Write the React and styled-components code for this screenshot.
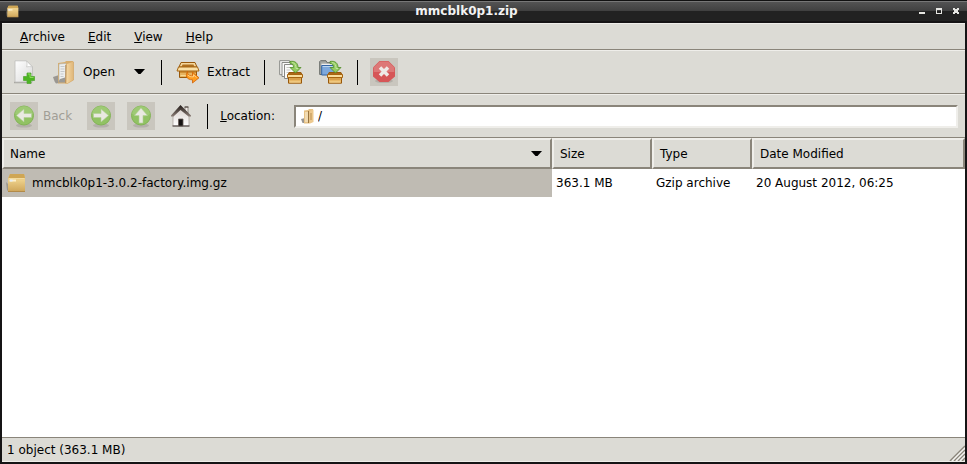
import { useState } from "react";
import styled, { createGlobalStyle } from "styled-components";

const face = "#dcdbd5";
const light = "#efeeea";
const dark = "#8a857a";
const disabledFace = "#c9c6be";

const GlobalStyles = createGlobalStyle`
  * {
    box-sizing: border-box;
  }
  body {
    margin: 0;
    font-family: "DejaVu Sans", sans-serif;
    font-size: 12px;
    color: #000;
  }
  button, input {
    font: inherit;
    color: inherit;
  }
`;

const Window = styled.div`
  display: flex;
  flex-direction: column;
  min-height: 100vh;
  padding: 0 2px 2px;
  background: #151415;
`;

const TitleBar = styled.header`
  display: grid;
  grid-template-columns: auto 1fr auto;
  align-items: center;
  height: 23px;
  margin: 0 -2px;
  padding: 0 2px 0 6px;
  border-top: 1px solid #111;
  border-bottom: 2px solid #151415;
  background: linear-gradient(#777 0 1px, #535353 1px, #404040 10px, #222 10px);
`;

const Title = styled.h1`
  margin: 0;
  font-size: 12px;
  font-weight: bold;
  text-align: center;
  color: #f2f2f2;
`;

const WindowControls = styled.div`
  display: flex;
`;

const ControlButton = styled.button`
  display: flex;
  align-items: center;
  justify-content: center;
  width: 17px;
  height: 17px;
  padding: 0;
  border: 0;
  background: none;
`;

const bar = `
  display: flex;
  align-items: center;
  background: ${face};
  border-top: 1px solid ${light};
  border-bottom: 1px solid ${dark};
`;

const MenuBar = styled.nav`
  ${bar}
  height: 27px;
  padding: 0 6px;
`;

const MenuItem = styled.button`
  padding: 0 12px 0 11px;
  border: 0;
  background: none;

  &:first-child {
    padding-left: 12px;
  }
`;

const Toolbar = styled.div`
  ${bar}
  gap: 12px;
  height: 44px;
  padding: 0 7px 0 8px;
`;

const ToolButton = styled.button`
  display: flex;
  align-items: center;
  flex: none;
  gap: 7px;
  padding: 2px;
  border: 0;
  background: none;

  svg {
    display: block;
  }
`;

const ArrowButton = styled(ToolButton)`
  width: 20px;
  height: 28px;
  justify-content: center;
`;

const DisabledFace = styled.span`
  padding: 2px;
  background: ${disabledFace};
`;

const DisabledButton = styled(ToolButton)`
  gap: 5px;
  padding: 0;
  color: #a19e96;
`;

const BackButton = styled(DisabledButton)`
  padding-right: 3px;
`;

const Separator = styled.span`
  flex: none;
  width: 1px;
  height: 25px;
  background: #000;
`;

const Field = styled.div`
  display: flex;
  align-items: center;
  flex: 1;
  height: 23px;
  margin-left: 7px;
  padding-left: 4px;
  background: #fff;
  border: 2px solid;
  border-color: ${dark} ${light} ${light} ${dark};
`;

const LocationInput = styled.input`
  flex: 1;
  min-width: 0;
  padding: 0 2px;
  border: 0;
  outline: 0;
  background: none;
`;

const List = styled.main`
  flex: 1;
  background: #fff;
`;

const FileTable = styled.table`
  width: 100%;
  table-layout: fixed;
  border-collapse: separate;
  border-spacing: 0;
`;

const Column = styled.col`
  width: ${(props) => props.$width || "auto"};
`;

const HeaderCell = styled.th`
  height: 31px;
  padding: 0 6px;
  text-align: left;
  font-weight: normal;
  background: ${face};
  border: 2px solid;
  border-color: ${light} ${dark} ${dark} ${light};
`;

const HeaderContent = styled.div`
  display: flex;
  align-items: center;
  justify-content: space-between;
  padding-right: 2px;
`;

const Cell = styled.td`
  height: 28px;
  padding: 0 4px;
  white-space: nowrap;
  background: ${(props) => (props.$selected ? "#bfbbb3" : "#fff")};
`;

const FileName = styled.div`
  display: flex;
  align-items: center;
  gap: 6px;
`;

const StatusBar = styled.footer`
  display: flex;
  align-items: center;
  justify-content: space-between;
  height: 25px;
  padding-left: 5px;
  background: ${face};
  border-top: 1px solid ${dark};
  border-bottom: 1px solid ${light};
`;

const Grip = styled.svg`
  align-self: flex-end;
`;

const DownArrow = () => (
  <svg width="11" height="6" viewBox="0 0 11 6" aria-hidden="true">
    <path d="M0 0h11L6.5 5h-2z" fill="#000" />
  </svg>
);

const PackageIcon = ({ size = 20 }) => (
  <svg width={size} height={size} viewBox="0 0 20 20" aria-hidden="true">
    <defs>
      <linearGradient id="pack" x1="0" y1="0" x2="0" y2="1">
        <stop offset="0" stopColor="#d9b566" />
        <stop offset="0.35" stopColor="#edd08a" />
        <stop offset="1" stopColor="#cfa65a" />
      </linearGradient>
    </defs>
    <path d="M0 9l3 3v7l-2-2z" fill="#847e75" opacity=".6" />
    <path d="M4 1h14l1 4v13.500H2V5z" fill="url(#pack)" />
    <path d="M4 1h14l1 4H2.500z" fill="#cfa654" />
    <path d="M3 5.500h15.500" stroke="#f2da9d" />
    <path d="M4 7.500h6" stroke="#fff1cd" strokeWidth="2" />
    <path d="M3.500 7.500h3" stroke="#e4ecf4" strokeWidth="2" />
    <path d="M2 18.500h17" stroke="#b28a48" />
  </svg>
);

const NewIcon = () => (
  <svg width="24" height="24" viewBox="0 0 24 24" aria-hidden="true">
    <defs>
      <linearGradient id="paper" x1="0" y1="0" x2="1" y2="1">
        <stop offset="0" stopColor="#fff" />
        <stop offset="1" stopColor="#d9d9d9" />
      </linearGradient>
    </defs>
    <path d="M2 22.500h18" stroke="#aaa8a3" strokeWidth="1.500" />
    <path d="M3 .8h11.500l6 6V22H3z" fill="url(#paper)" stroke="#bcbcba" strokeWidth=".8" />
    <path d="M14.500 1c1 3 .5 5 0 6 2-.6 4-.4 6 0z" fill="#fff" stroke="#c4c4c2" strokeWidth=".7" />
    <path d="M15 13h4v3.500h3.500v4H19V23.500h-4v-3h-3.500v-4H15z" fill="#4cb522" stroke="#57a637" strokeWidth=".8" />
    <path d="M16 14h2v3.500h3.500" fill="none" stroke="#8bdd58" />
  </svg>
);

const FolderIcon = () => (
  <svg width="24" height="24" viewBox="0 0 24 24" aria-hidden="true">
    <defs>
      <linearGradient id="folder" x1="0" y1="0" x2="1" y2="0">
        <stop offset="0" stopColor="#f7dcaa" />
        <stop offset="1" stopColor="#dfb678" />
      </linearGradient>
    </defs>
    <path d="M1 17l6-2v8l-3 .5c-1-1-2-3-3-6.500z" fill="#7d7a75" opacity=".7" />
    <path d="M6 3l7-1 1-1h6.500l1 1v18l-6 3.500H6z" fill="#d8ae6e" />
    <path d="M7 4l7-.5V20l-7 1.500z" fill="#eceeee" stroke="#b4b1aa" strokeWidth=".6" />
    <path d="M8.500 6.500h4M8.500 9h4M8.500 11.500h4M8.500 14h3M8.500 16.500h3" stroke="#c5c8ca" />
    <path d="M8 19l5-1.500v5H6z" fill="#9b9a96" />
    <path d="M14.500 4l6-2.500 1 .5v18l-6 3.500h-2z" fill="url(#folder)" stroke="#d0a466" strokeWidth=".5" />
    <path d="M13.800 5v18" stroke="#a77b42" strokeWidth=".8" />
  </svg>
);

const SmallFolderIcon = () => (
  <svg width="16" height="16" viewBox="0 0 16 16" aria-hidden="true">
    <path d="M1 11l4-1v5H2.500z" fill="#77736d" opacity=".75" />
    <path d="M4 2.500L8 2l1-1h4v12.500L9 15.500H4z" fill="#e6c184" />
    <path d="M5 4h3v10H5z" fill="#f1dbb2" />
    <path d="M8.500 3v12" stroke="#97733e" />
    <path d="M9.500 3.500L13 1.500l.5.500v12l-4 1.700z" fill="#edc98e" />
    <path d="M11 5v7" stroke="#b98f53" />
  </svg>
);

const ExtractIcon = () => (
  <svg width="24" height="24" viewBox="0 0 24 24" aria-hidden="true">
    <path d="M3.500 8h17v9.500h-17z" fill="#e7b460" stroke="#98580b" />
    <path d="M4.500 15.500h15" stroke="#f7d995" />
    <path d="M4 12h16" stroke="#c98327" strokeWidth="1.500" />
    <path d="M5 2.500h14l2 4.500H3z" fill="#f5d79c" stroke="#98580b" strokeLinejoin="round" />
    <path d="M6.500 4.500h11l1 2.500h-13z" fill="#b0701f" />
    <path d="M2.500 7h19l1.500 4H1z" fill="#fae0a5" stroke="#a66512" strokeLinejoin="round" />
    <path d="M11.500 11.500c0 3 1 4.300 5 4.300v-3.600l6.500 5.600-6.500 5.200v-3.200c-6 0-7.500-4-5-8.300z" fill="#ff9d1f" stroke="#cf6105" strokeWidth=".8" strokeLinejoin="round" />
    <path d="M12 15c1 1.500 3 2 5.500 1.800v-2l3 2.700" fill="none" stroke="#ffd087" />
  </svg>
);

const Box = () => (
  <>
    <path d="M10 12.500h12l1.500 4h-15z" fill="#aa691a" stroke="#98580b" strokeLinejoin="round" />
    <path d="M9.500 16h13v7.200h-13z" fill="#e8b764" stroke="#98580b" />
    <path d="M10.500 19h11" stroke="#c98735" />
    <path d="M10.500 22h11" stroke="#f6d798" />
    <path d="M8.500 14.500h15v3h-15z" fill="#f8dc9c" stroke="#a66512" />
    <path d="M11 1.500c5-1 8 1.500 8 6h3L16.500 13 11 7.500h3.500c0-2.500-1-4-3.500-4z" fill="#94cb63" stroke="#4e8b25" strokeWidth=".8" strokeLinejoin="round" />
    <path d="M13 2.500c3 .5 4 2.500 4 6h2" fill="none" stroke="#c2e59f" />
  </>
);

const AddFilesIcon = () => (
  <svg width="24" height="24" viewBox="0 0 24 24" aria-hidden="true">
    <path d="M.7.700h10v14H.7z" fill="#fafafa" stroke="#888986" />
    <path d="M3 2.500h10v14H3z" fill="#fafafa" stroke="#888986" />
    <path d="M5.500 4.500h10v14h-10z" fill="#fafafa" stroke="#888986" />
    <path d="M7.500 7.500h5M7.500 10h4M7.500 12.500h3" stroke="#c7c7c5" />
    <Box />
  </svg>
);

const AddFolderIcon = () => (
  <svg width="24" height="24" viewBox="0 0 24 24" aria-hidden="true">
    <path d="M.7 14.500V1.500L1.500.7H7l1 2h8v12z" fill="#a6a8a4" stroke="#686b68" />
    <path d="M2.500 3.700h11.500v3H2.500z" fill="#eee" />
    <path d="M2.700 5.500h14v9.500h-14z" fill="#7da8dc" stroke="#3465a4" />
    <path d="M3.700 6.500h12" stroke="#bcd5ef" />
    <Box />
  </svg>
);

const StopIcon = () => (
  <svg width="24" height="24" viewBox="0 0 24 24" aria-hidden="true">
    <ellipse cx="12" cy="21" rx="9" ry="2" fill="#aaa59e" opacity=".7" />
    <path d="M7.500 1h9L23 7.500v9L16.500 22h-9L1 16.500v-9z" fill="#d65657" />
    <path d="M7.700 1.500h8.600l6 6V12H1.700V7.500z" fill="#e08785" opacity=".7" />
    <path d="M8 7.500l8 8M16 7.500l-8 8" stroke="#eeeae7" strokeWidth="3.500" />
  </svg>
);

// angle turns the right-pointing arrow
const ArrowIcon = ({ angle = 0 }) => (
  <svg width="24" height="24" viewBox="0 0 24 24" aria-hidden="true">
    <ellipse cx="12" cy="21.500" rx="8" ry="2" fill="#aaa79f" opacity=".7" />
    <circle cx="12" cy="11.500" r="9.500" fill="#91c263" stroke="#82b455" />
    <path d="M3 10a9 8 0 0 1 18 0c-3 3-10 4-18 0z" fill="#a7ce80" opacity=".6" />
    <path
      d="M4.500 9.500H12V5l7.500 6.500L12 18v-4.500H4.500z"
      fill="#e9e9e1"
      stroke="#b1ce97"
      strokeWidth=".6"
      transform={`rotate(${angle} 12 11.500)`}
    />
  </svg>
);

const HomeIcon = () => (
  <svg width="24" height="24" viewBox="0 0 24 24" aria-hidden="true">
    <defs>
      <linearGradient id="roof" x1="0" y1="0" x2="0" y2="1">
        <stop offset="0" stopColor="#211a17" />
        <stop offset="1" stopColor="#8b7d76" />
      </linearGradient>
      <linearGradient id="wall" x1="0" y1="0" x2="0" y2="1">
        <stop offset="0" stopColor="#d8cfca" />
        <stop offset="1" stopColor="#fff" />
      </linearGradient>
    </defs>
    <path d="M16 3h3v6L16 6z" fill="#f0ebe7" stroke="#746a64" strokeWidth=".7" />
    <path d="M15.500 3h4" stroke="#463a35" />
    <path d="M4 11l7.500-8L20 11v11H4z" fill="url(#wall)" stroke="#a49c97" strokeWidth=".7" />
    <path d="M11.500 1L22 11.500v1h-2.500L11.500 6 4.500 12.500H2v-1z" fill="url(#roof)" />
    <path d="M3.500 22h17" stroke="#5d5552" strokeWidth="1.300" />
    <path d="M9.500 15h4.500v7H9.500z" fill="#171413" stroke="#665b56" strokeWidth=".8" />
  </svg>
);

const columns = [
  { label: "Name", sorted: true },
  { label: "Size", width: "100px" },
  { label: "Type", width: "100px" },
  { label: "Date Modified", width: "213px" },
];

const files = [
  {
    name: "mmcblk0p1-3.0.2-factory.img.gz",
    size: "363.1 MB",
    type: "Gzip archive",
    modified: "20 August 2012, 06:25",
  },
];

const App = () => {
  const [location, setLocation] = useState("/");
  const [selected, setSelected] = useState(0);

  return (
    <Window>
      <GlobalStyles />
      <TitleBar>
        <PackageIcon size={13} />
        <Title>mmcblk0p1.zip</Title>
        <WindowControls>
          <ControlButton aria-label="Minimize">
            <svg width="7" height="7" viewBox="0 0 7 7">
              <path d="M0 4h6v2H0z" fill="#e6e6e2" />
            </svg>
          </ControlButton>
          <ControlButton aria-label="Maximize">
            <svg width="7" height="7" viewBox="0 0 7 7">
              <path d="M0 0h6v6H0zM1 2v3h4V2z" fill="#e6e6e2" fillRule="evenodd" />
            </svg>
          </ControlButton>
          <ControlButton aria-label="Close">
            <svg width="7" height="7" viewBox="0 0 7 7">
              <path d="M0 0h2v1h2V0h2v2H5v2h1v2H4V5H2v1H0V4h1V2H0z" fill="#e6e6e2" />
            </svg>
          </ControlButton>
        </WindowControls>
      </TitleBar>

      <MenuBar>
        <MenuItem><u>A</u>rchive</MenuItem>
        <MenuItem><u>E</u>dit</MenuItem>
        <MenuItem><u>V</u>iew</MenuItem>
        <MenuItem><u>H</u>elp</MenuItem>
      </MenuBar>

      <Toolbar>
        <ToolButton aria-label="New"><NewIcon /></ToolButton>
        <ToolButton><FolderIcon />Open</ToolButton>
        <ArrowButton aria-label="Open recent"><DownArrow /></ArrowButton>
        <Separator />
        <ToolButton><ExtractIcon />Extract</ToolButton>
        <Separator />
        <ToolButton aria-label="Add files"><AddFilesIcon /></ToolButton>
        <ToolButton aria-label="Add folder"><AddFolderIcon /></ToolButton>
        <Separator />
        <DisabledButton disabled aria-label="Stop">
          <DisabledFace><StopIcon /></DisabledFace>
        </DisabledButton>
      </Toolbar>

      <Toolbar>
        <BackButton disabled>
          <DisabledFace><ArrowIcon angle={180} /></DisabledFace>
          Back
        </BackButton>
        <DisabledButton disabled aria-label="Forward">
          <DisabledFace><ArrowIcon /></DisabledFace>
        </DisabledButton>
        <DisabledButton disabled aria-label="Up">
          <DisabledFace><ArrowIcon angle={-90} /></DisabledFace>
        </DisabledButton>
        <ToolButton aria-label="Home"><HomeIcon /></ToolButton>
        <Separator />
        <label htmlFor="location"><u>L</u>ocation:</label>
        <Field>
          <SmallFolderIcon />
          <LocationInput
            id="location"
            value={location}
            onChange={(e) => setLocation(e.target.value)}
          />
        </Field>
      </Toolbar>

      <List>
        <FileTable>
          <colgroup>
            {columns.map((column) => (
              <Column key={column.label} $width={column.width} />
            ))}
          </colgroup>
          <thead>
            <tr>
              {columns.map((column) => (
                <HeaderCell key={column.label} scope="col">
                  <HeaderContent>
                    {column.label}
                    {column.sorted && <DownArrow />}
                  </HeaderContent>
                </HeaderCell>
              ))}
            </tr>
          </thead>
          <tbody>
            {files.map((file, i) => (
              <tr key={file.name} onClick={() => setSelected(i)}>
                <Cell $selected={selected === i}>
                  <FileName>
                    <PackageIcon />
                    {file.name}
                  </FileName>
                </Cell>
                <Cell>{file.size}</Cell>
                <Cell>{file.type}</Cell>
                <Cell>{file.modified}</Cell>
              </tr>
            ))}
          </tbody>
        </FileTable>
      </List>

      <StatusBar>
        1 object (363.1 MB)
        <Grip width="16" height="16" viewBox="0 0 16 16" aria-hidden="true">
          <path d="M1 16L16 1M5 16L16 5M9 16l7-7M13 16l3-3" stroke="#8a857a" strokeWidth="1.500" />
          <path d="M3 16L16 3M7 16l9-9M11 16l5-5" stroke="#f5f4f1" strokeWidth="1.200" />
        </Grip>
      </StatusBar>
    </Window>
  );
};

export default App;
